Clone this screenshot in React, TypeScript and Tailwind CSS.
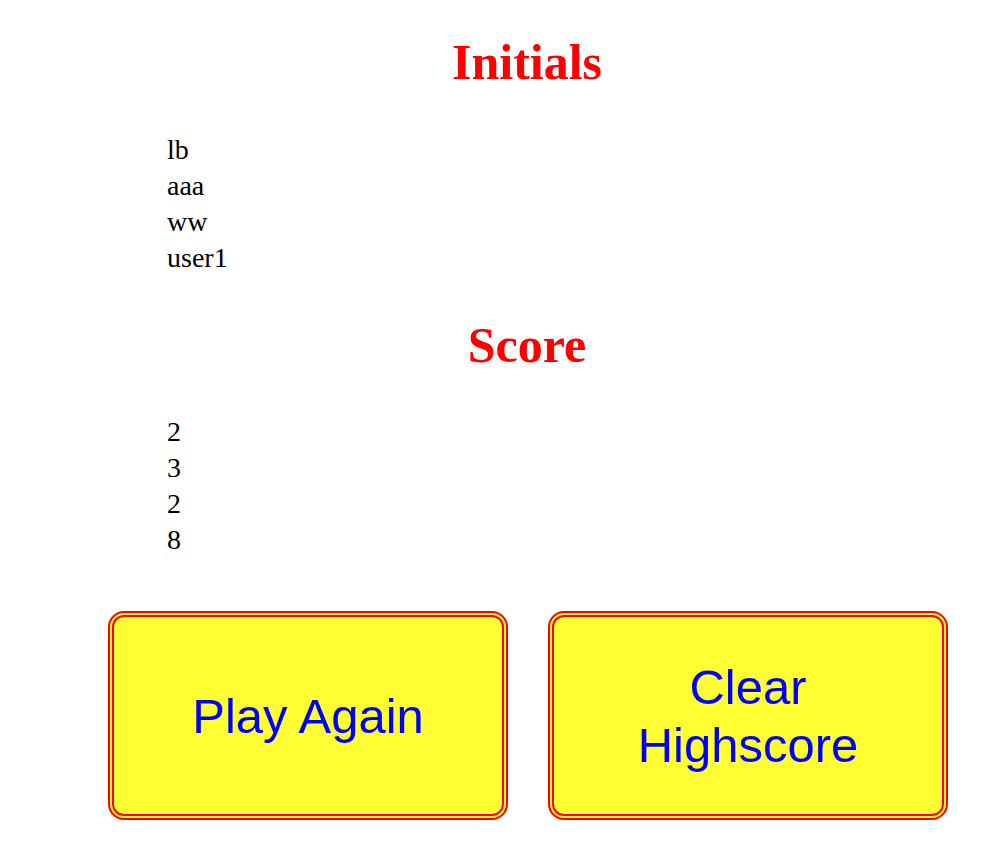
import React from "react";

const initials = ["lb", "aaa", "ww", "user1"];
const scores = [2, 3, 2, 8];

export default function App() {
  return (
    <div className="min-h-[866px] bg-white font-['Liberation_Serif',serif] text-black">
      <div className="ml-[56px] pt-[33px]">
        <h1 className="text-center text-[50px] font-bold leading-[58px] text-[#ff0000]">Initials</h1>
        <ul className="mt-[41px] pl-[111px] text-[28px] leading-[36px]">
          {initials.map((name, i) => (
            <li key={i}>{name}</li>
          ))}
        </ul>
        <h1 className="mt-[40px] text-center text-[50px] font-bold leading-[58px] text-[#ff0000]">Score</h1>
        <ul className="mt-[40px] pl-[111px] text-[28px] leading-[36px]">
          {scores.map((s, i) => (
            <li key={i}>{s}</li>
          ))}
        </ul>
        <div className="ml-[52px] mt-[53px] flex gap-[40px]">
          <button className="flex h-[209px] w-[400px] items-center justify-center rounded-[16px] border-[6px] border-double border-[#ff0000] bg-[#ffff33] px-4 font-['Liberation_Sans',Arial,sans-serif] text-[49px] leading-[58px] text-[#0000ff]">
            Play Again
          </button>
          <button className="flex h-[209px] w-[400px] items-center justify-center rounded-[16px] border-[6px] border-double border-[#ff0000] bg-[#ffff33] px-4 font-['Liberation_Sans',Arial,sans-serif] text-[49px] leading-[58px] text-[#0000ff]">
            Clear
            <br />
            Highscore
          </button>
        </div>
      </div>
    </div>
  );
}
